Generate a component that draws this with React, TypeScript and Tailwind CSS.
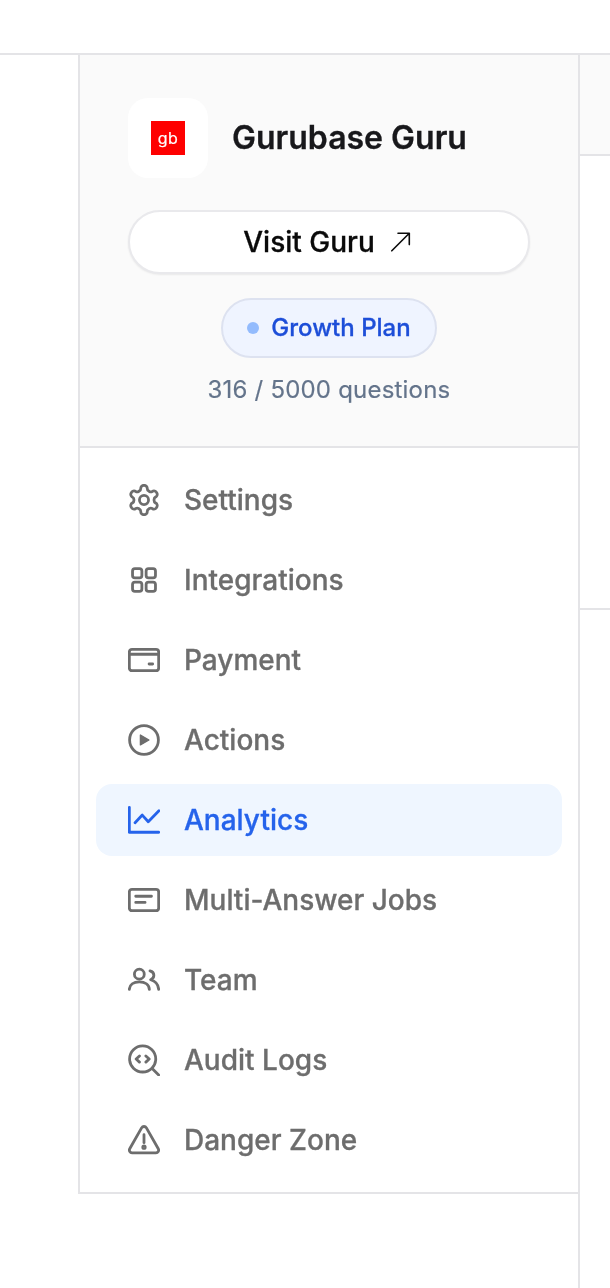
import React from "react";

const P = { fill: "none", stroke: "currentColor", strokeWidth: 2.1, strokeLinecap: "round" as const, strokeLinejoin: "round" as const };

function Svg({ children }: { children: React.ReactNode }) {
  return (
    <svg viewBox="0 0 24 24" className="w-8 h-8 shrink-0" {...P}>
      {children}
    </svg>
  );
}

const icons: Record<string, React.ReactNode> = {
  settings: (
    <Svg>
      <g transform="translate(12 12) scale(1.1) translate(-12 -12)" strokeWidth="1.9">
        <circle cx="12" cy="12" r="3.100" />
        <path d="M12.22 2h-.44a2 2 0 0 0-2 2v.18a2 2 0 0 1-1 1.73l-.43.25a2 2 0 0 1-2 0l-.15-.08a2 2 0 0 0-2.73.73l-.22.38a2 2 0 0 0 .73 2.73l.15.1a2 2 0 0 1 1 1.72v.51a2 2 0 0 1-1 1.74l-.15.09a2 2 0 0 0-.73 2.73l.22.38a2 2 0 0 0 2.73.73l.15-.08a2 2 0 0 1 2 0l.43.25a2 2 0 0 1 1 1.73V20a2 2 0 0 0 2 2h.44a2 2 0 0 0 2-2v-.18a2 2 0 0 1 1-1.73l.43-.25a2 2 0 0 1 2 0l.15.08a2 2 0 0 0 2.73-.73l.22-.39a2 2 0 0 0-.73-2.73l-.15-.08a2 2 0 0 1-1-1.74v-.5a2 2 0 0 1 1-1.74l.15-.09a2 2 0 0 0 .73-2.73l-.22-.38a2 2 0 0 0-2.73-.73l-.15.08a2 2 0 0 1-2 0l-.43-.25a2 2 0 0 1-1-1.73V4a2 2 0 0 0-2-2z" />
      </g>
    </Svg>
  ),
  grid: (
    <Svg>
      <rect x="3.4" y="3.4" width="7" height="7" rx="1.8" />
      <rect x="13.6" y="3.4" width="7" height="7" rx="1.8" />
      <rect x="3.4" y="13.6" width="7" height="7" rx="1.8" />
      <rect x="13.6" y="13.6" width="7" height="7" rx="1.8" />
    </Svg>
  ),
  card: (
    <Svg>
      <rect x="1" y="4" width="22" height="16" rx="2" />
      <path d="M1 7.700h22M15.800 15h2.700" />
    </Svg>
  ),
  play: (
    <Svg>
      <circle cx="12" cy="12" r="10.800" />
      <path d="M9.300 8.300v7.400l6.400-3.700z" fill="currentColor" strokeWidth="1" />
    </Svg>
  ),
  chart: (
    <Svg>
      <path d="M1 2.500v18.700h22" />
      <path d="M5.300 14l5.400-5.700 4.500 5 8-8.300" />
    </Svg>
  ),
  jobs: (
    <Svg>
      <rect x="1" y="4" width="22" height="16" rx="2" />
      <path d="M5.800 9.200h11.800M5.800 13.800h7" />
    </Svg>
  ),
  team: (
    <Svg>
      <circle cx="8.500" cy="7.600" r="3.700" />
      <path d="M1 19c.2-3.500 3.200-5.600 7.500-5.600s7.300 2.100 7.500 5.600" />
      <path d="M16.500 5.200c1.800.5 2.900 1.900 2.900 3.300s-.9 2.700-2.400 3.300c3.200.9 5.700 3.500 6 7.200" />
    </Svg>
  ),
  audit: (
    <Svg>
      <circle cx="11" cy="11.200" r="9.800" />
      <path d="M18.300 18.500l4.700 4.700" />
      <path d="M8.600 9l-2.500 2.300 2.500 2.300M13.400 9l2.500 2.300-2.500 2.300" />
    </Svg>
  ),
  danger: (
    <Svg>
      <path d="M10.200 2.900L1.300 18.600a2 2 0 0 0 1.800 3h17.800a2 2 0 0 0 1.800-3L13.800 2.900a2.100 2.100 0 0 0-3.600 0z" />
      <path d="M12 8v6" />
      <circle cx="12" cy="17.400" r="0.900" />
    </Svg>
  ),
};

const items: [string, string][] = [
  ["settings", "Settings"],
  ["grid", "Integrations"],
  ["card", "Payment"],
  ["play", "Actions"],
  ["chart", "Analytics"],
  ["jobs", "Multi-Answer Jobs"],
  ["team", "Team"],
  ["audit", "Audit Logs"],
  ["danger", "Danger Zone"],
];

export default function App() {
  return (
    <div className="w-[610px] h-[1288px] overflow-hidden bg-white flex flex-col font-['Inter',sans-serif] antialiased">
      <header className="h-[55px] shrink-0 border-b-2 border-[#e4e4e7] bg-white" />
      <div className="flex flex-1 min-h-0">
        <div className="w-[78px] shrink-0" />
        <aside className="w-[500px] shrink-0 self-start border-l-2 border-b-2 border-[#e4e4e7] will-change-transform">
          <div className="h-[393px] border-b-2 border-[#e4e4e7] bg-[#fafafa] px-12 pt-[43px] flex flex-col">
            <div className="flex items-center gap-6">
              <div className="w-20 h-20 rounded-[20px] bg-white flex items-center justify-center">
                <div className="w-[34px] h-[34px] bg-[#fe0000] flex items-center justify-center text-white text-[16px] tracking-[0.5px] leading-none font-normal [-webkit-text-stroke:0.2px]">
                  gb
                </div>
              </div>
              <div className="text-[32px] leading-10 font-semibold text-[#18181b] [-webkit-text-stroke:0.3px]">Gurubase Guru</div>
            </div>
            <button className="mt-8 h-16 w-[402px] rounded-full bg-white border-2 border-[#e9e9ec] shadow-[0_1px_2px_rgba(0,0,0,0.07)] flex items-center justify-center gap-4 text-[28px] leading-9 font-medium text-[#0a0a0a]">
              <span className="[-webkit-text-stroke:0.3px]">Visit Guru</span>
              <svg viewBox="0 0 24 24" className="w-6 h-6" fill="none" stroke="currentColor" strokeWidth="1.6" strokeLinecap="round" strokeLinejoin="round">
                <path d="M0.800 20.800L18.300 3.300M7 3.300h11.300v11.300" />
              </svg>
            </button>
            <div className="mt-6 self-center h-[60px] rounded-full border-2 border-[#dde2f0] bg-[#eff4ff] flex items-center gap-3 pl-6 pr-6 text-[24px] font-medium text-[#1d4ed8]">
              <span className="w-3 h-3 rounded-full bg-[#93bbfd]" />
              <span className="[-webkit-text-stroke:0.3px]">Growth Plan</span>
            </div>
            <div className="mt-[14px] text-center text-[24px] leading-9 tracking-[0.2px] text-[#64748b] [-webkit-text-stroke:0.2px]">316 / 5000 questions</div>
          </div>
          <nav className="px-4 pt-4 pb-4 flex flex-col gap-2">
            {items.map(([k, label]) => {
              const active = k === "chart";
              return (
                <div
                  key={k}
                  className={
                    active
                      ? "h-[72px] rounded-2xl bg-[#eff6ff] text-[#2563eb] flex items-center gap-6 px-8 text-[28px] font-medium"
                      : "h-[72px] rounded-2xl text-[#6d6d6d] flex items-center gap-6 px-8 text-[28px] font-medium"
                  }
                >
                  {icons[k]}
                  <span className="[-webkit-text-stroke:0.3px]">{label}</span>
                </div>
              );
            })}
          </nav>
        </aside>
        <div className="flex-1 border-l-2 border-[#e4e4e7] flex flex-col">
          <div className="h-[101px] bg-[#fafafa] border-b-2 border-[#e4e4e7]" />
          <div className="h-[454px] border-b-2 border-[#e4e4e7]" />
        </div>
      </div>
    </div>
  );
}
